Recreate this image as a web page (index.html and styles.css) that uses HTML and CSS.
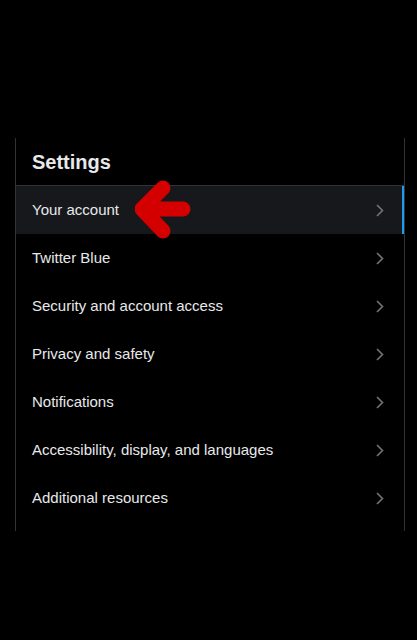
FILE: index.html
```html
<!DOCTYPE html>
<html lang="en">
<head>
<meta charset="utf-8">
<title>Settings</title>
<link rel="stylesheet" href="styles.css">
</head>
<body>
<div class="panel">
  <div class="header"><h2 class="title">Settings</h2></div>
  <nav class="list">
    <a class="row active" href="#">
      <span class="label">Your account</span>
      <svg class="chev" viewBox="0 0 8 13" width="8" height="13"><path d="M1 1 L6.5 6.5 L1 12" fill="none" stroke="currentColor" stroke-width="1.6"/></svg>
      <svg class="pointer" viewBox="0 0 56 60" width="56" height="60"><path d="M28 8 L7 29 L28 51 M7 29 L48 29" fill="none" stroke="#d40000" stroke-width="15" stroke-linecap="round" stroke-linejoin="round"/></svg>
    </a>
    <a class="row" href="#"><span class="label">Twitter Blue</span><svg class="chev" viewBox="0 0 8 13" width="8" height="13"><path d="M1 1 L6.5 6.5 L1 12" fill="none" stroke="currentColor" stroke-width="1.6"/></svg></a>
    <a class="row" href="#"><span class="label">Security and account access</span><svg class="chev" viewBox="0 0 8 13" width="8" height="13"><path d="M1 1 L6.5 6.5 L1 12" fill="none" stroke="currentColor" stroke-width="1.6"/></svg></a>
    <a class="row" href="#"><span class="label">Privacy and safety</span><svg class="chev" viewBox="0 0 8 13" width="8" height="13"><path d="M1 1 L6.5 6.5 L1 12" fill="none" stroke="currentColor" stroke-width="1.6"/></svg></a>
    <a class="row" href="#"><span class="label">Notifications</span><svg class="chev" viewBox="0 0 8 13" width="8" height="13"><path d="M1 1 L6.5 6.5 L1 12" fill="none" stroke="currentColor" stroke-width="1.6"/></svg></a>
    <a class="row" href="#"><span class="label">Accessibility, display, and languages</span><svg class="chev" viewBox="0 0 8 13" width="8" height="13"><path d="M1 1 L6.5 6.5 L1 12" fill="none" stroke="currentColor" stroke-width="1.6"/></svg></a>
    <a class="row" href="#"><span class="label">Additional resources</span><svg class="chev" viewBox="0 0 8 13" width="8" height="13"><path d="M1 1 L6.5 6.5 L1 12" fill="none" stroke="currentColor" stroke-width="1.6"/></svg></a>
  </nav>
</div>
</body>
</html>
```
FILE: styles.css
```css
html, body {
  margin: 0;
  padding: 0;
  background: #000;
}
body {
  width: 417px;
  height: 640px;
  overflow: hidden;
  font-family: "Liberation Sans", Arial, sans-serif;
  color: #e7e9ea;
}
.panel {
  margin: 138px 0 0 15px;
  width: 388px;
  height: 393px;
  border-left: 1px solid #2f3336;
  border-right: 1px solid #2f3336;
}
.header {
  height: 47px;
  display: flex;
  align-items: center;
  padding: 0 16px;
  border-bottom: 1px solid #2f3336;
}
.title {
  margin: 0;
  font-size: 20px;
  font-weight: 700;
  line-height: 24px;
}
.list {
  display: flex;
  flex-direction: column;
}
.row {
  position: relative;
  height: 48px;
  display: flex;
  align-items: center;
  justify-content: space-between;
  padding: 0 20px 0 16px;
  text-decoration: none;
  color: #e7e9ea;
  font-size: 15px;
  line-height: 20px;
}
.row.active {
  background: #16181c;
  box-shadow: inset -2px 0 0 #1d9bf0;
}
.chev {
  color: #71767b;
  display: block;
}
.pointer {
  position: absolute;
  left: 119px;
  top: -6px;
}
```
